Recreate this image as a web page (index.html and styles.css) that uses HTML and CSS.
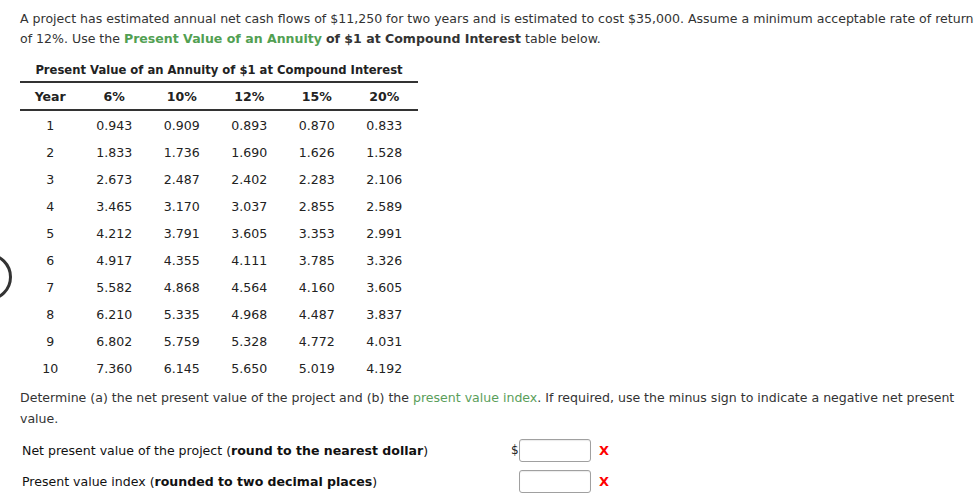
FILE: index.html
```html
<!DOCTYPE html>
<html>
<head>
<meta charset="utf-8">
<link rel="stylesheet" href="styles.css">
</head>
<body>
<div class="page">
  <p class="intro">A project has estimated annual net cash flows of $11,250 for two years and is estimated to cost $35,000. Assume a minimum acceptable rate of return of 12%. Use the <b class="green">Present Value of an Annuity</b> <b>of $1 at Compound Interest</b> table below.</p>
  <table class="pv">
    <caption>Present Value of an Annuity of $1 at Compound Interest</caption>
    <thead>
      <tr><th class="yr">Year</th><th>6%</th><th>10%</th><th>12%</th><th>15%</th><th>20%</th></tr>
    </thead>
    <tbody>
      <tr><td>1</td><td>0.943</td><td>0.909</td><td>0.893</td><td>0.870</td><td>0.833</td></tr>
      <tr><td>2</td><td>1.833</td><td>1.736</td><td>1.690</td><td>1.626</td><td>1.528</td></tr>
      <tr><td>3</td><td>2.673</td><td>2.487</td><td>2.402</td><td>2.283</td><td>2.106</td></tr>
      <tr><td>4</td><td>3.465</td><td>3.170</td><td>3.037</td><td>2.855</td><td>2.589</td></tr>
      <tr><td>5</td><td>4.212</td><td>3.791</td><td>3.605</td><td>3.353</td><td>2.991</td></tr>
      <tr><td>6</td><td>4.917</td><td>4.355</td><td>4.111</td><td>3.785</td><td>3.326</td></tr>
      <tr><td>7</td><td>5.582</td><td>4.868</td><td>4.564</td><td>4.160</td><td>3.605</td></tr>
      <tr><td>8</td><td>6.210</td><td>5.335</td><td>4.968</td><td>4.487</td><td>3.837</td></tr>
      <tr><td>9</td><td>6.802</td><td>5.759</td><td>5.328</td><td>4.772</td><td>4.031</td></tr>
      <tr><td>10</td><td>7.360</td><td>6.145</td><td>5.650</td><td>5.019</td><td>4.192</td></tr>
    </tbody>
  </table>
  <p class="determine">Determine (a) the net present value of the project and (b) the <span class="green-link">present value index</span>. If required, use the minus sign to indicate a negative net present value.</p>
  <div class="answers">
    <div class="arow">
      <span class="label">Net present value of the project (<b>round to the nearest dollar</b>)</span>
      <span class="field"><span class="cur">$</span><span class="box"></span></span>
      <span class="mark">X</span>
    </div>
    <div class="arow">
      <span class="label">Present value index (<b>rounded to two decimal places</b>)</span>
      <span class="field"><span class="cur"></span><span class="box"></span></span>
      <span class="mark">X</span>
    </div>
  </div>
</div>
<div class="ring"></div>
</body>
</html>
```

FILE: styles.css
```css
html, body {
  margin: 0;
  padding: 0;
  background: #fff;
}
body {
  font-family: "DejaVu Sans", Verdana, sans-serif;
  font-size: 12.55px;
  color: #333;
}
.page {
  padding: 9px 0 0 20px;
}
p { margin: 0; }
.intro {
  line-height: 20px;
  width: 955px;
}
.green { color: #52a052; }
.green-link { color: #5a9e5a; }
.pv {
  border-collapse: collapse;
  margin-top: 10px;
  width: 398px;
  font-size: 12.55px;
}
.pv caption {
  font-weight: bold;
  font-size: 11.6px;
  height: 22px;
  line-height: 22px;
  text-align: center;
  color: #222;
}
.pv thead th {
  border-top: 2px solid #333;
  border-bottom: 2px solid #333;
  height: 26px;
  padding: 0;
  font-weight: bold;
  color: #222;
  width: 67px;
}
.pv thead th.yr { width: 60px; }
.pv td {
  text-align: center;
  height: 27px;
  padding: 0;
  color: #222;
}
.pv tbody tr:first-child td { height: 28px; }
.determine {
  margin-top: 5px;
  line-height: 21px;
  width: 950px;
}
.answers {
  margin-top: 9px;
  padding-left: 2px;
}
.arow {
  display: flex;
  align-items: center;
  height: 24px;
  margin-bottom: 7px;
}
.label {
  width: 489px;
  color: #111;
}
.field {
  display: flex;
  align-items: center;
}
.cur {
  width: 8px;
  font-size: 12px;
  color: #222;
}
.box {
  display: block;
  width: 70px;
  height: 21px;
  border: 1px solid #a0a0a0;
  border-radius: 3px;
  box-shadow: inset 0 1px 1px rgba(0,0,0,0.08);
  background: #fff;
}
.mark {
  margin-left: 8px;
  color: #f00;
  font-weight: bold;
  font-size: 13px;
}
.ring {
  position: absolute;
  left: -36px;
  top: 253px;
  width: 42px;
  height: 42px;
  border: 3px solid #333;
  border-radius: 50%;
}
```
